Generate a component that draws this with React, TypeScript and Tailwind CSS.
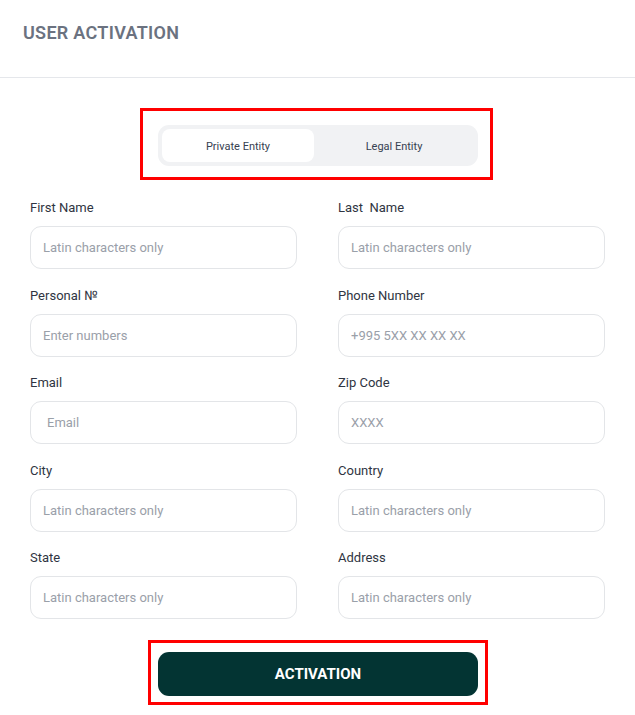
import React from "react";

const fields = [
  { label: "First Name", placeholder: "Latin characters only", focus: true },
  { label: "Last  Name", placeholder: "Latin characters only" },
  { label: "Personal №", placeholder: "Enter numbers" },
  { label: "Phone Number", placeholder: "+995 5XX XX XX XX" },
  { label: "Email", placeholder: "Email", indent: true },
  { label: "Zip Code", placeholder: "XXXX" },
  { label: "City", placeholder: "Latin characters only" },
  { label: "Country", placeholder: "Latin characters only" },
  { label: "State", placeholder: "Latin characters only" },
  { label: "Address", placeholder: "Latin characters only" },
];

function Field({ label, placeholder, focus, indent }: { label: string; placeholder: string; focus?: boolean; indent?: boolean }) {
  return (
    <div className="flex flex-col">
      <label className="text-[13px] leading-4 text-[#2f3542] whitespace-pre">{label}</label>
      <input
        autoFocus={focus}
        placeholder={placeholder}
        className={
          "mt-[10px] h-[43px] w-full rounded-[11px] border border-[#e3e5e8] bg-white text-[13px] text-[#2f3542] placeholder:text-[#9aa0a9] outline-none caret-[#1f2937] " +
          (indent ? "pl-4" : "pl-3")
        }
      />
    </div>
  );
}

export default function App() {
  return (
    <div className="w-[635px] h-[715px] bg-white font-['Roboto','Liberation_Sans',sans-serif]">
      {/* Header */}
      <div className="h-[78px] border-b border-[#e5e7eb] px-[23px] pt-[19px]">
        <h1 className="text-[18px] font-semibold tracking-[0.3px] text-[#6b7280]">USER ACTIVATION</h1>
      </div>

      {/* Entity switch */}
      <div className="mt-[30px] ml-[140px] w-[353px] h-[72px] border-[3px] border-[#ff0000] pl-[15px] pt-[14px]">
        <div className="flex w-[320px] h-[41px] rounded-[11px] bg-[#f1f2f4] p-1">
          <button className="w-[152px] rounded-[8px] bg-white pt-[3px] text-[11px] text-[#374151]">Private Entity</button>
          <button className="flex-1 pt-[3px] text-[11px] text-[#374151]">Legal Entity</button>
        </div>
      </div>

      {/* Form */}
      <div className="mt-[20px] px-[30px] grid grid-cols-2 gap-x-[41px] gap-y-[18.5px]">
        {fields.map((f) => (
          <Field key={f.label} {...f} />
        ))}
      </div>

      {/* Submit */}
      <div className="mt-[21px] ml-[148px] w-[340px] h-[65px] border-[3px] border-[#ff0000] pl-[7px] pt-[9px]">
        <button className="w-[320px] h-[44px] rounded-[11px] bg-[#033433] text-[15px] font-bold text-white">
          ACTIVATION
        </button>
      </div>
    </div>
  );
}
